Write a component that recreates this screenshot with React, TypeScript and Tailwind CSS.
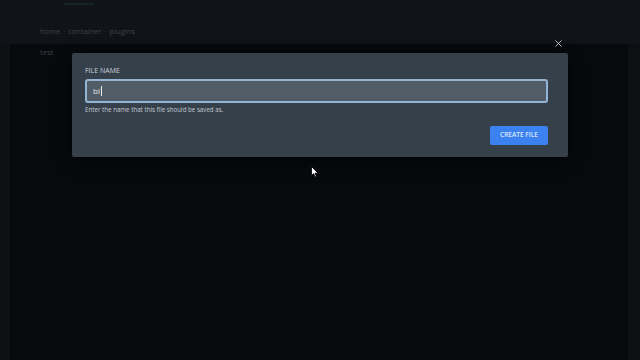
import { X } from 'lucide-react';

export default function App() {
  return (
    <div
      className="relative w-[640px] h-[360px] overflow-hidden bg-[#0a0b0f] text-[#9aa3ad] leading-none"
      style={{ fontFamily: '"Open Sans", "Liberation Sans", sans-serif' }}
    >
      {/* Underlying page (dimmed) */}
      <div className="flex flex-col h-full">
        <header className="relative h-[44px] shrink-0 bg-[#101318] pl-[40px] pt-[27px]">
          <div className="absolute left-[64px] top-[3px] w-[30px] h-[2px] bg-[#17232b]" />
          <nav className="flex items-center gap-[3px] text-[7.5px] leading-[8px] text-[#3d434b]">
            <span>home</span>
            <span>·</span>
            <span>container</span>
            <span>·</span>
            <span>plugins</span>
          </nav>
        </header>
        <div className="flex flex-1">
          <div className="w-[10px] bg-[#0e1014]" />
          <main className="flex-1 bg-[#07090c] pl-[30px] pt-[4px]">
            <span className="block text-[7.5px] leading-[8px] text-[#3d434b]">test</span>
          </main>
          <div className="w-[12px] bg-[#0d0f13]" />
        </div>
      </div>

      {/* Modal */}
      <div className="absolute inset-0 flex justify-center pt-[53px]">
        <button className="absolute left-[553px] top-[38px] text-[#c4c8cc]">
          <X className="w-[11px] h-[11px]" strokeWidth={2} />
        </button>
        <div className="w-[496px] h-[104px] bg-[#36404b] rounded-[2px] shadow-[0_4px_16px_rgba(0,0,0,0.6)] px-[13px] pt-[14px]">
          <label className="block text-[7px] leading-[8px] font-medium text-[#c9d1da]">
            FILE NAME
          </label>
          <div className="mt-[4px] h-[24px] w-[463px] rounded-[3px] border-2 border-[#94b4d6] bg-[#525c67] flex items-center pl-[6px]">
            <span className="text-[8px] leading-[10px] text-[#e6eaee]">bl</span>
            <span className="ml-[1px] w-[1px] h-[10px] bg-[#e6eaee]" />
          </div>
          <p className="mt-[3px] text-[6.2px] leading-[8px] text-[#c2cad2]">
            Enter the name that this file should be saved as.
          </p>
          <div className="flex justify-end mt-[12px] pr-[7px]">
            <button className="h-[19px] w-[58px] rounded-[2px] bg-[#3b82f0] text-[6.5px] leading-none font-semibold text-[#dbe8fb]">
              CREATE FILE
            </button>
          </div>
        </div>
      </div>

      {/* Mouse cursor */}
      <svg
        className="absolute left-[311px] top-[166px]"
        width="8"
        height="12"
        viewBox="0 0 8 12"
      >
        <path d="M0.5 0.5 L0.5 9.5 L2.6 7.6 L4 11 L5.4 10.4 L4 7.2 L7 7.2 Z" fill="#fff" stroke="#000" strokeWidth="0.8" />
      </svg>
    </div>
  );
}
